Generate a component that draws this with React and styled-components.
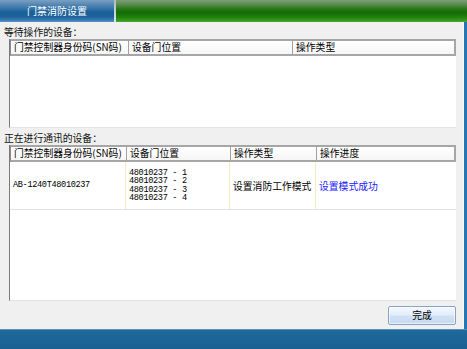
import React from "react";
import styled, { createGlobalStyle } from "styled-components";

const Global = createGlobalStyle`
  html, body { margin: 0; padding: 0; }
  body {
    width: 467px; height: 349px; overflow: hidden;
    background: #f0f0f0;
    font-family: "Noto Sans CJK SC", "Noto Sans", sans-serif;
  }
`;

const Window = styled.div`
  width: 467px;
  height: 349px;
  display: flex;
  flex-direction: column;
  background: #f0f0f0;
`;

const TitleBar = styled.div`
  height: 22px;
  display: flex;
  flex: none;
`;

const Tab = styled.div`
  width: 114px;
  display: flex;
  align-items: center;
  justify-content: center;
  color: #fff;
  font-size: 10px;
  line-height: 1;
  background: linear-gradient(
    #7aa0c2 0%, #5b8ab4 18%, #3274aa 40%, #1b5f98 55%, #1d6299 75%, #3a7db5 92%, #5a94c4 100%
  );
`;

const TabSep = styled.div`
  width: 2px;
  background: linear-gradient(#a7c2b6, #d6e4ec);
`;

const GreenFill = styled.div`
  flex: 1;
  background: linear-gradient(
    #7c9f74 0%, #5f8d55 18%, #2d7a1c 38%, #136b04 55%, #1c7f0a 75%, #36971f 92%, #4aa630 100%
  );
`;

const Middle = styled.div`
  flex: 1;
  display: flex;
  min-height: 0;
`;

const Content = styled.div`
  flex: 1;
  display: flex;
  flex-direction: column;
  padding: 4px 0 0 4px;
`;

const RightStrip = styled.div`
  box-sizing: border-box;
  width: 4px;
  border-left: 1px solid #fafafa;
  background: #2477b4;
`;

const Label = styled.div`
  font-size: 9.8px;
  line-height: 12px;
  height: 12px;
  color: #111;
  margin-top: ${(p) => p.$top || 0}px;
`;

const List = styled.div`
  margin: 1px 0 0 5px;
  width: 447px;
  height: ${(p) => p.$h}px;
  box-sizing: border-box;
  background: #fff;
  border-left: 1px solid #7a7a7a;
  border-bottom: 1px solid #e4e4e4;
  display: flex;
  flex-direction: column;
`;

const HeaderRow = styled.div`
  display: grid;
  grid-template-columns: ${(p) => p.$cols};
  height: 17px;
  box-sizing: border-box;
  border: 2px solid #a6a6a6;
  border-left: 1px solid #8a8a8a;
  background: linear-gradient(#ffffff, #f6f6f6);
`;

const HeaderCell = styled.div`
  font-size: 9.8px;
  line-height: 13px;
  padding-left: 3px;
  color: #000;
  white-space: nowrap;
  overflow: hidden;
  border-left: ${(p) => (p.$first ? "none" : "1px solid #a0a0a0")};
`;

const DataRow = styled.div`
  display: grid;
  grid-template-columns: ${(p) => p.$cols};
  height: 48px;
  border-bottom: 1px solid #e2e2e2;
  box-sizing: border-box;
`;

const Cell = styled.div`
  display: flex;
  align-items: center;
  padding-left: 3px;
  border-left: ${(p) => (p.$first ? "none" : "1px solid #f3ebc4")};
  color: ${(p) => p.$color || "#000"};
  font-size: 9.8px;
  white-space: nowrap;
`;

const Mono = styled.div`
  font-family: "Liberation Mono", "DejaVu Sans Mono", monospace;
  font-size: 8.6px;
  letter-spacing: -0.35px;
  line-height: 8.4px;
  color: #000;
  white-space: pre;
`;

const ButtonRow = styled.div`
  display: flex;
  justify-content: flex-end;
  padding: 5px 7px 0 0;
`;

const Button = styled.button`
  width: 68px;
  height: 19px;
  box-sizing: border-box;
  border: 1px solid #8aa3c2;
  border-radius: 2px;
  background: linear-gradient(#f3f8fd 0%, #e3eef9 45%, #cfe0f3 55%, #c5daf1 100%);
  font-family: "Noto Sans CJK SC", sans-serif;
  font-size: 9.8px;
  line-height: 1;
  color: #000;
  padding: 0;
  box-shadow: inset 0 0 0 1px rgba(255,255,255,0.6);
`;

const BottomBar = styled.div`
  height: 20px;
  flex: none;
  border-top: 1px solid #5a8fb8;
  box-sizing: border-box;
  background: linear-gradient(#1e6a9c, #19608f);
`;

const cols1 = "117px 164px 1fr";
const cols2 = "115px 104px 86px 1fr";

export default function App() {
  return (
    <Window>
      <Global />
      <TitleBar>
        <Tab>门禁消防设置</Tab>
        <TabSep />
        <GreenFill />
      </TitleBar>
      <Middle>
        <Content>
          <Label>等待操作的设备：</Label>
          <List $h={89}>
            <HeaderRow $cols={cols1}>
              <HeaderCell $first>门禁控制器身份码(SN码)</HeaderCell>
              <HeaderCell>设备门位置</HeaderCell>
              <HeaderCell>操作类型</HeaderCell>
            </HeaderRow>
          </List>
          <Label $top={4}>正在进行通讯的设备：</Label>
          <List $h={156}>
            <HeaderRow $cols={cols2}>
              <HeaderCell $first>门禁控制器身份码(SN码)</HeaderCell>
              <HeaderCell>设备门位置</HeaderCell>
              <HeaderCell>操作类型</HeaderCell>
              <HeaderCell>操作进度</HeaderCell>
            </HeaderRow>
            <DataRow $cols={cols2}>
              <Cell $first>
                <Mono>AB-1240T48010237</Mono>
              </Cell>
              <Cell>
                <Mono>{"48010237 - 1\n48010237 - 2\n48010237 - 3\n48010237 - 4"}</Mono>
              </Cell>
              <Cell>设置消防工作模式</Cell>
              <Cell $color="#1a1aff">设置模式成功</Cell>
            </DataRow>
          </List>
          <ButtonRow>
            <Button>完成</Button>
          </ButtonRow>
        </Content>
        <RightStrip />
      </Middle>
      <BottomBar />
    </Window>
  );
}
